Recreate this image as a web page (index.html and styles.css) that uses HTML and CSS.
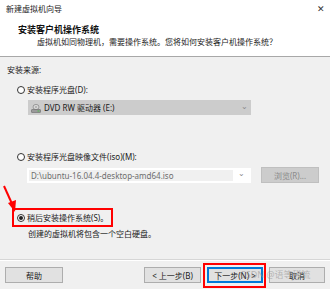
FILE: index.html
```html
<!DOCTYPE html>
<html lang="zh-CN">
  <head>
    <meta charset="UTF-8" />
    <title>新建虚拟机向导</title>
    <link rel="stylesheet" href="styles.css">
  </head>
  <body>
    <div class="window">
      <div class="titlebar">
        <span class="titlebar-text">新建虚拟机向导</span>
        <span class="close">✕</span>
      </div>

      <div class="header">
        <div class="header-title">安装客户机操作系统</div>
        <div class="header-sub">虚拟机如同物理机，需要操作系统。您将如何安装客户机操作系统？</div>
      </div>

      <div class="content">
        <div class="label">安装来源:</div>

        <div class="radio-row first">
          <span class="radio"></span>
          <span>安装程序光盘(D):</span>
        </div>
        <div class="combo dvd">
          <svg class="drive-icon" width="10" height="10" viewBox="0 0 10 10">
            <ellipse cx="5" cy="4" rx="3" ry="2.6" fill="#d8d8d8" stroke="#8a8a8a" stroke-width="0.8" />
            <circle cx="5" cy="4" r="0.8" fill="#8a8a8a" />
            <rect x="0.5" y="6.5" width="9" height="3" rx="0.5" fill="#9a9a9a" stroke="#6a6a6a" stroke-width="0.6" />
            <rect x="6.5" y="7.6" width="2" height="0.8" fill="#3fbf3f" />
          </svg>
          <span class="combo-text">DVD RW 驱动器 (E:)</span>
          <span class="chevron">⌄</span>
        </div>

        <div class="radio-row second">
          <span class="radio"></span>
          <span>安装程序光盘映像文件(iso)(M):</span>
        </div>
        <div class="iso-row">
          <div class="combo iso">
            <span class="combo-text">D:\ubuntu-16.04.4-desktop-amd64.iso</span>
            <span class="chevron-box"><span class="chevron">⌄</span></span>
          </div>
          <div class="btn disabled browse">浏览(R)...</div>
        </div>

        <div class="marked">
          <div class="radio-row">
            <span class="radio checked"></span>
            <span>稍后安装操作系统(S)。</span>
          </div>
        </div>
        <div class="note">创建的虚拟机将包含一个空白硬盘。</div>

        <svg class="arrow" width="16" height="30" viewBox="0 0 16 30">
          <line x1="2" y1="2" x2="11" y2="22" stroke="#ff0000" stroke-width="2" />
          <polygon points="6,19 14,16 13,28" fill="#ff0000" />
        </svg>
      </div>

      <div class="footer">
        <div class="btn help">帮助</div>
        <div class="btn-group">
          <div class="btn">&lt; 上一步(B)</div>
          <div class="btn primary">
            下一步(N) &gt;
            <span class="mark-box"></span>
          </div>
          <div class="btn">取消</div>
        </div>
        <span class="watermark">CSDN @语等稀流</span>
      </div>
    </div>
  </body>
</html>
```

FILE: styles.css
```css
* {
  margin: 0;
  padding: 0;
  box-sizing: border-box;
}

body {
  font-family: "Noto Sans", "Noto Sans CJK SC", sans-serif;
  font-size: 8px;
  color: #1a1a1a;
  background: #f0f0f0;
}

.window {
  position: relative;
  width: 330px;
  height: 289px;
  background: #f0f0f0;
  display: flex;
  flex-direction: column;
  overflow: hidden;
}

.titlebar {
  height: 17px;
  background: #fff;
  display: flex;
  align-items: center;
  justify-content: space-between;
  padding: 0 5px 0 6px;
  line-height: 11px;
}

.close {
  font-size: 9px;
  color: #333;
}

.header {
  height: 40px;
  background: #fff;
  border-bottom: 1px solid #a8a8a8;
  padding: 7px 0 0 18px;
}

.header-title {
  font-size: 9px;
  font-weight: 700;
  line-height: 11px;
  color: #111;
}

.header-sub {
  margin: 1px 0 0 19px;
  line-height: 11px;
}

.content {
  position: relative;
  height: 203px;
  padding: 7px 0 0 7px;
  display: flex;
  flex-direction: column;
  align-items: flex-start;
  border-bottom: 1px solid #d6d6d6;
}

.label {
  line-height: 11px;
}

.radio-row {
  display: flex;
  align-items: center;
  gap: 2px;
  line-height: 11px;
  height: 11px;
  margin-left: 10px;
}

.radio-row.first {
  margin-top: 9px;
}

.radio-row.second {
  margin-top: 36px;
}

.radio {
  width: 8px;
  height: 8px;
  border: 1px solid #333;
  border-radius: 50%;
  background: #fff;
  display: flex;
  align-items: center;
  justify-content: center;
}

.radio.checked::after {
  content: "";
  width: 4px;
  height: 4px;
  border-radius: 50%;
  background: #222;
}

.combo {
  height: 15px;
  display: flex;
  align-items: center;
}

.combo.dvd {
  margin: 5px 0 0 21px;
  width: 223px;
  background: #cccccc;
  padding-left: 3px;
}

.drive-icon {
  margin-right: 3px;
}

.combo-text {
  flex: 1;
  line-height: 11px;
}

.chevron {
  width: 14px;
  font-size: 8px;
  color: #8a8a8a;
  line-height: 8px;
  text-align: center;
  margin-top: -4px;
}

.iso-row {
  margin: 5px 0 0 20px;
  display: flex;
  align-items: center;
  gap: 10px;
}

.combo.iso {
  width: 224px;
  background: #f0f0f0;
  border: 1px solid #fff;
  box-shadow: inset 0 0 0 1px #fff;
  padding-left: 3px;
}

.combo.iso .combo-text {
  color: #6d6d6d;
}

.chevron-box {
  width: 17px;
  height: 100%;
  background: #fff;
  display: flex;
  align-items: center;
  justify-content: center;
}

.btn {
  position: relative;
  height: 16px;
  width: 56px;
  background: #e1e1e1;
  border: 1px solid #adadad;
  display: flex;
  align-items: center;
  justify-content: center;
  line-height: 11px;
  white-space: nowrap;
}

.btn.disabled {
  background: #cccccc;
  border-color: #bfbfbf;
  color: #8a8a8a;
}

.browse {
  width: 58px;
}

.marked {
  margin: 25px 0 0 5px;
  width: 101px;
  height: 19px;
  border: 2px solid #ff0000;
  display: flex;
  align-items: center;
}

.marked .radio-row {
  margin-left: 3px;
}

.note {
  margin: 1px 0 0 21px;
  line-height: 11px;
}

.arrow {
  position: absolute;
  left: 2px;
  top: 127px;
}

.footer {
  position: relative;
  flex: 1;
  border-top: 1px solid #fff;
  display: flex;
  align-items: flex-start;
  padding: 6px 5px 0 5px;
}

.help {
  width: 58px;
}

.btn-group {
  margin-left: auto;
  display: flex;
  gap: 6px;
}

.btn-group .btn:first-child {
  width: 57px;
}

.btn.primary {
  border-color: #0078d7;
  box-shadow: inset 0 0 0 1px #0078d7;
}

.mark-box {
  position: absolute;
  left: -5px;
  top: -5px;
  width: 63px;
  height: 25px;
  border: 2px solid #ff0000;
}

.watermark {
  position: absolute;
  left: 240px;
  top: 8px;
  font-size: 9px;
  line-height: 11px;
  color: rgba(140, 140, 140, 0.55);
  white-space: nowrap;
}
```
